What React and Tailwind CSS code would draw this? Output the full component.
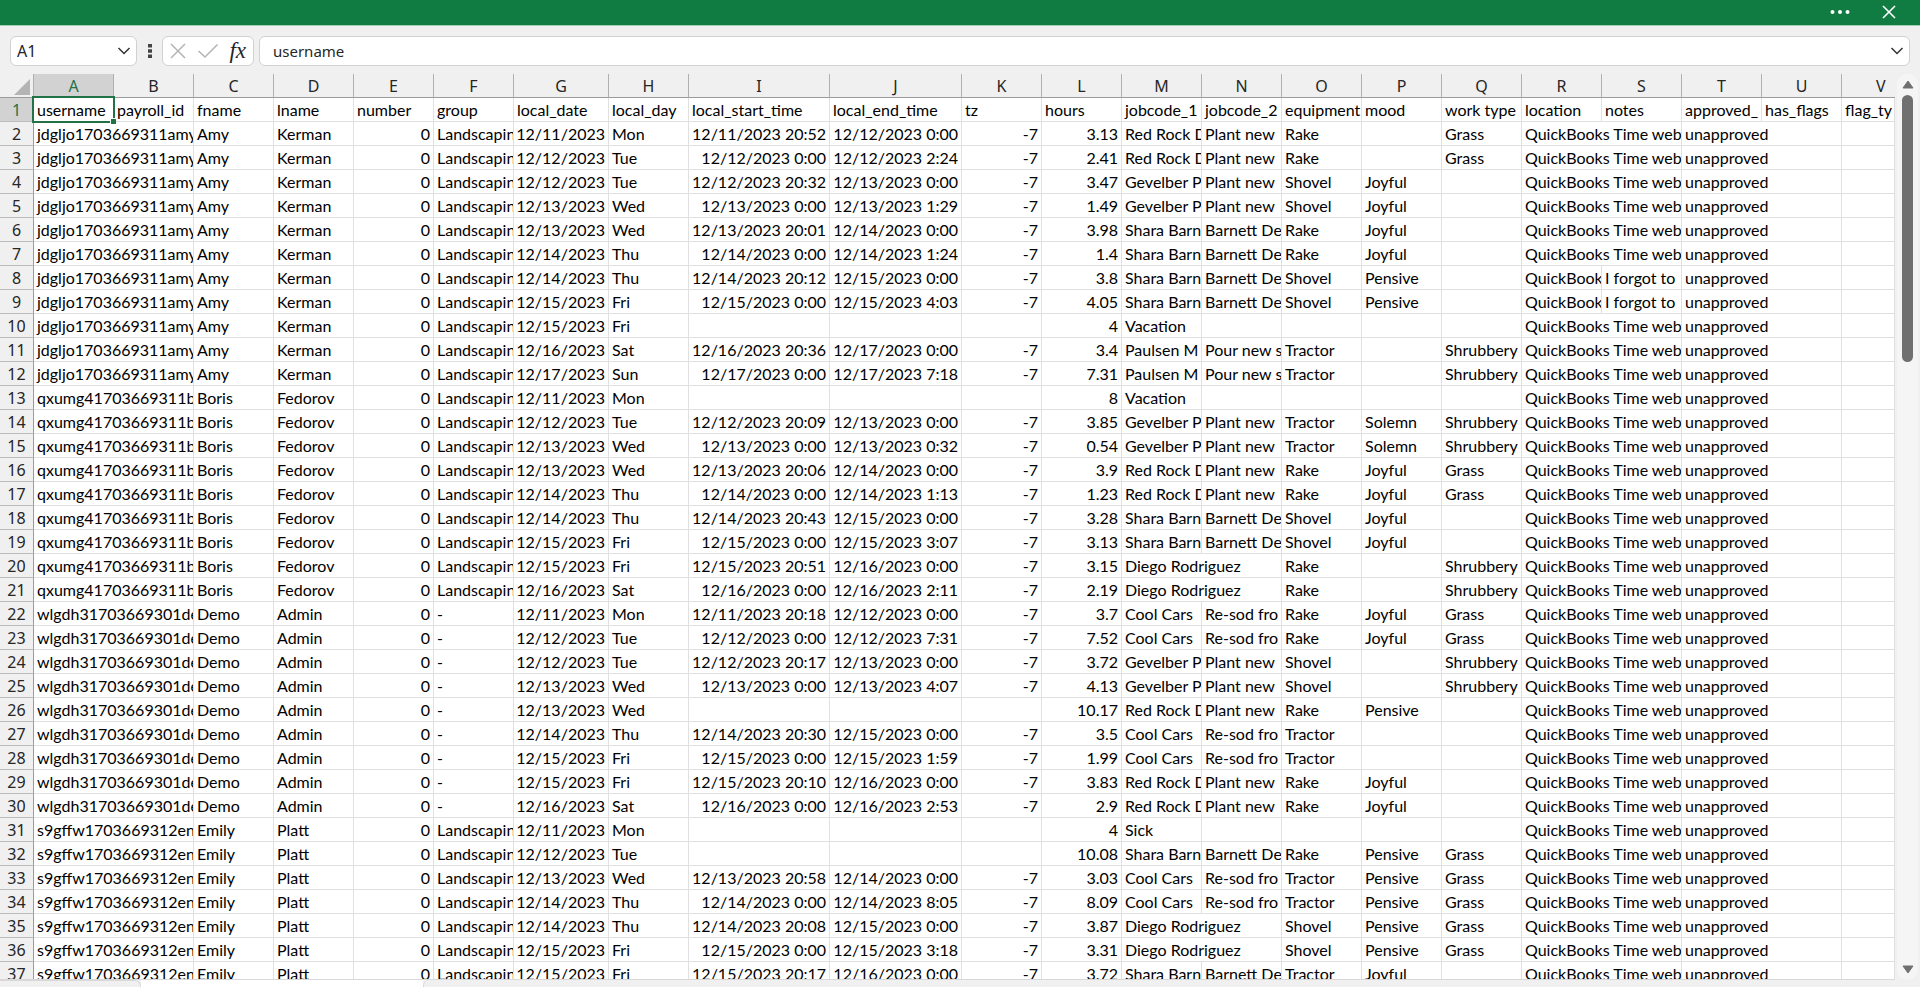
import { Fragment } from "react";

const COLUMNS = [
  ["A", "w-[80px]"],
  ["B", "w-[80px]"],
  ["C", "w-[80px]"],
  ["D", "w-[80px]"],
  ["E", "w-[80px]"],
  ["F", "w-[80px]"],
  ["G", "w-[95px]"],
  ["H", "w-[80px]"],
  ["I", "w-[141px]"],
  ["J", "w-[132px]"],
  ["K", "w-[80px]"],
  ["L", "w-[80px]"],
  ["M", "w-[80px]"],
  ["N", "w-[80px]"],
  ["O", "w-[80px]"],
  ["P", "w-[80px]"],
  ["Q", "w-[80px]"],
  ["R", "w-[80px]"],
  ["S", "w-[80px]"],
  ["T", "w-[80px]"],
  ["U", "w-[80px]"],
];

const FIELDS = [
  "username", "payroll_id", "fname", "lname", "number", "group", "local_date", "local_day",
  "local_start_time", "local_end_time", "tz", "hours", "jobcode_1", "jobcode_2", "equipment",
  "mood", "work type", "location", "notes", "approved_", "has_flags", "flag_ty",
];

const AMY = ["jdgljo1703669311amy", "Amy", "Kerman", "Landscapin"];
const BORIS = ["qxumg41703669311b", "Boris", "Fedorov", "Landscapin"];
const DEMO = ["wlgdh31703669301de", "Demo", "Admin", "-"];
const EMILY = ["s9gffw1703669312en", "Emily", "Platt", "Landscapin"];

const RED = ["Red Rock D", "Plant new"];
const GEV = ["Gevelber P", "Plant new"];
const SHARA = ["Shara Barn", "Barnett De"];
const PAULSEN = ["Paulsen M", "Pour new s"];
const DIEGO = ["Diego Rodriguez", ""];
const COOL = ["Cool Cars", "Re-sod fro"];
const VACATION = ["Vacation", ""];
const SICK = ["Sick", ""];

// person, day of month, weekday, start, end, hours, job, equipment, mood, work type, note
const ENTRIES = [
  [AMY, 11, "Mon", "11/2023 20:52", "12/2023 0:00", "3.13", RED, "Rake", "", "Grass"],
  [AMY, 12, "Tue", "12/2023 0:00", "12/2023 2:24", "2.41", RED, "Rake", "", "Grass"],
  [AMY, 12, "Tue", "12/2023 20:32", "13/2023 0:00", "3.47", GEV, "Shovel", "Joyful", ""],
  [AMY, 13, "Wed", "13/2023 0:00", "13/2023 1:29", "1.49", GEV, "Shovel", "Joyful", ""],
  [AMY, 13, "Wed", "13/2023 20:01", "14/2023 0:00", "3.98", SHARA, "Rake", "Joyful", ""],
  [AMY, 14, "Thu", "14/2023 0:00", "14/2023 1:24", "1.4", SHARA, "Rake", "Joyful", ""],
  [AMY, 14, "Thu", "14/2023 20:12", "15/2023 0:00", "3.8", SHARA, "Shovel", "Pensive", "", "I forgot to"],
  [AMY, 15, "Fri", "15/2023 0:00", "15/2023 4:03", "4.05", SHARA, "Shovel", "Pensive", "", "I forgot to"],
  [AMY, 15, "Fri", "", "", "4", VACATION, "", "", ""],
  [AMY, 16, "Sat", "16/2023 20:36", "17/2023 0:00", "3.4", PAULSEN, "Tractor", "", "Shrubbery"],
  [AMY, 17, "Sun", "17/2023 0:00", "17/2023 7:18", "7.31", PAULSEN, "Tractor", "", "Shrubbery"],
  [BORIS, 11, "Mon", "", "", "8", VACATION, "", "", ""],
  [BORIS, 12, "Tue", "12/2023 20:09", "13/2023 0:00", "3.85", GEV, "Tractor", "Solemn", "Shrubbery"],
  [BORIS, 13, "Wed", "13/2023 0:00", "13/2023 0:32", "0.54", GEV, "Tractor", "Solemn", "Shrubbery"],
  [BORIS, 13, "Wed", "13/2023 20:06", "14/2023 0:00", "3.9", RED, "Rake", "Joyful", "Grass"],
  [BORIS, 14, "Thu", "14/2023 0:00", "14/2023 1:13", "1.23", RED, "Rake", "Joyful", "Grass"],
  [BORIS, 14, "Thu", "14/2023 20:43", "15/2023 0:00", "3.28", SHARA, "Shovel", "Joyful", ""],
  [BORIS, 15, "Fri", "15/2023 0:00", "15/2023 3:07", "3.13", SHARA, "Shovel", "Joyful", ""],
  [BORIS, 15, "Fri", "15/2023 20:51", "16/2023 0:00", "3.15", DIEGO, "Rake", "", "Shrubbery"],
  [BORIS, 16, "Sat", "16/2023 0:00", "16/2023 2:11", "2.19", DIEGO, "Rake", "", "Shrubbery"],
  [DEMO, 11, "Mon", "11/2023 20:18", "12/2023 0:00", "3.7", COOL, "Rake", "Joyful", "Grass"],
  [DEMO, 12, "Tue", "12/2023 0:00", "12/2023 7:31", "7.52", COOL, "Rake", "Joyful", "Grass"],
  [DEMO, 12, "Tue", "12/2023 20:17", "13/2023 0:00", "3.72", GEV, "Shovel", "", "Shrubbery"],
  [DEMO, 13, "Wed", "13/2023 0:00", "13/2023 4:07", "4.13", GEV, "Shovel", "", "Shrubbery"],
  [DEMO, 13, "Wed", "", "", "10.17", RED, "Rake", "Pensive", ""],
  [DEMO, 14, "Thu", "14/2023 20:30", "15/2023 0:00", "3.5", COOL, "Tractor", "", ""],
  [DEMO, 15, "Fri", "15/2023 0:00", "15/2023 1:59", "1.99", COOL, "Tractor", "", ""],
  [DEMO, 15, "Fri", "15/2023 20:10", "16/2023 0:00", "3.83", RED, "Rake", "Joyful", ""],
  [DEMO, 16, "Sat", "16/2023 0:00", "16/2023 2:53", "2.9", RED, "Rake", "Joyful", ""],
  [EMILY, 11, "Mon", "", "", "4", SICK, "", "", ""],
  [EMILY, 12, "Tue", "", "", "10.08", SHARA, "Rake", "Pensive", "Grass"],
  [EMILY, 13, "Wed", "13/2023 20:58", "14/2023 0:00", "3.03", COOL, "Tractor", "Pensive", "Grass"],
  [EMILY, 14, "Thu", "14/2023 0:00", "14/2023 8:05", "8.09", COOL, "Tractor", "Pensive", "Grass"],
  [EMILY, 14, "Thu", "14/2023 20:08", "15/2023 0:00", "3.87", DIEGO, "Shovel", "Pensive", "Grass"],
  [EMILY, 15, "Fri", "15/2023 0:00", "15/2023 3:18", "3.31", DIEGO, "Shovel", "Pensive", "Grass"],
  [EMILY, 15, "Fri", "15/2023 20:17", "16/2023 0:00", "3.72", SHARA, "Tractor", "Joyful", ""],
];

function Cell({ children, right, span = 1 }) {
  return (
    <td
      colSpan={span}
      className={
        right
          ? "h-6 overflow-hidden whitespace-nowrap border-r border-b border-[#e0e0e0] pr-[3px] text-right"
          : "h-6 overflow-hidden whitespace-nowrap border-r border-b border-[#e0e0e0] pl-[3px]"
      }
    >
      {children}
    </td>
  );
}

function RowHead({ n, active }) {
  return (
    <th
      scope="row"
      className={
        active
          ? "h-6 border-r border-b border-r-[#9b9b9b] border-b-[#bdbdbd] bg-[#d2d2d2] text-center font-['Noto_Sans',sans-serif] font-normal text-[#217346]"
          : "h-6 border-r border-b border-r-[#9b9b9b] border-b-[#bdbdbd] bg-[#f0f0f0] text-center font-['Noto_Sans',sans-serif] font-normal text-[#262626]"
      }
    >
      {n}
    </th>
  );
}

function Entry({ n, entry }) {
  const [who, day, weekday, start, end, hours, job, equipment, mood, work, note] = entry;
  return (
    <tr>
      <RowHead n={n} />
      <Cell span={2}>{who[0]}</Cell>
      <Cell>{who[1]}</Cell>
      <Cell>{who[2]}</Cell>
      <Cell right>0</Cell>
      <Cell>{who[3]}</Cell>
      <Cell right>{`12/${day}/2023`}</Cell>
      <Cell>{weekday}</Cell>
      <Cell right>{start && `12/${start}`}</Cell>
      <Cell right>{end && `12/${end}`}</Cell>
      <Cell right>{start && "-7"}</Cell>
      <Cell right>{hours}</Cell>
      {job === DIEGO ? (
        <Cell span={2}>{job[0]}</Cell>
      ) : (
        <Fragment>
          <Cell>{job[0]}</Cell>
          <Cell>{job[1]}</Cell>
        </Fragment>
      )}
      <Cell>{equipment}</Cell>
      <Cell>{mood}</Cell>
      <Cell>{work}</Cell>
      {note ? (
        <Fragment>
          <Cell>QuickBooks</Cell>
          <Cell>{note}</Cell>
        </Fragment>
      ) : (
        <Cell span={2}>QuickBooks Time web</Cell>
      )}
      <Cell span={2}>unapproved</Cell>
      <Cell />
    </tr>
  );
}

function Chevron() {
  return (
    <svg viewBox="0 0 14 8" className="h-2 w-3.5" fill="none" stroke="#333" strokeWidth="1.5">
      <path d="M1.5 1 7 6.5 12.5 1" />
    </svg>
  );
}

function TitleBar() {
  return (
    <header className="flex h-[26px] shrink-0 items-start justify-end gap-8 border-b border-[#9fd0b3] bg-[#107c41] pr-6">
      <button aria-label="More options" className="flex h-6 items-center">
        <svg viewBox="0 0 20 4" className="h-1 w-5" fill="#fff">
          <circle cx="2.5" cy="2" r="2" />
          <circle cx="10" cy="2" r="2" />
          <circle cx="17.5" cy="2" r="2" />
        </svg>
      </button>
      <button aria-label="Close" className="flex h-6 items-center">
        <svg viewBox="0 0 14 14" className="size-3.5" fill="none" stroke="#fff" strokeWidth="1.6">
          <path d="M1 1 13 13M13 1 1 13" />
        </svg>
      </button>
    </header>
  );
}

function FormulaBar() {
  return (
    <div className="flex h-12 shrink-0 items-end px-[10px] font-['Noto_Sans',sans-serif] text-[15px] text-[#262626]">
      <div className="mb-2 flex h-[30px] w-[127px] items-center rounded-md border border-[#d1d1d1] bg-white pr-[5px]">
        <input
          aria-label="Name box"
          defaultValue="A1"
          className="min-w-0 flex-1 bg-transparent pl-1.5 text-[16px] outline-none"
        />
        <button aria-label="Open name list">
          <Chevron />
        </button>
      </div>
      <svg viewBox="0 0 4 14" className="mr-[10px] mb-4 ml-[11px] h-3.5 w-1" fill="#444">
        <path d="M0 0h4v3.500H0zM0 5.200h4v3.500H0zM0 10.400h4v3.500H0z" />
      </svg>
      <div className="mb-2 flex h-[30px] w-[92px] items-center justify-between rounded-md border border-[#d1d1d1] bg-white px-[7px]">
        <button aria-label="Cancel">
          <svg viewBox="0 0 16 16" className="size-4" fill="none" stroke="#b4b4b4" strokeWidth="1.5">
            <path d="M1 1 15 15M15 1 1 15" />
          </svg>
        </button>
        <button aria-label="Enter">
          <svg viewBox="0 0 20 16" className="h-4 w-5" fill="none" stroke="#b4b4b4" strokeWidth="1.5">
            <path d="M.5 8 7 14 19.500 1.500" />
          </svg>
        </button>
        <button
          aria-label="Insert function"
          className="font-['Liberation_Serif',serif] text-[23px] leading-6 text-[#262626] italic"
        >
          fx
        </button>
      </div>
      <div className="mb-2 ml-[5px] flex h-[30px] flex-1 items-center rounded-md border border-[#d1d1d1] bg-white pr-[5px]">
        <input
          aria-label="Formula"
          defaultValue="username"
          className="min-w-0 flex-1 bg-transparent pl-[13px] outline-none"
        />
        <button aria-label="Expand formula bar">
          <Chevron />
        </button>
      </div>
    </div>
  );
}

function Sheet() {
  return (
    <div className="min-w-0 flex-1 overflow-hidden border-b border-[#d8d8d8] bg-white">
      <table className="w-full table-fixed border-separate border-spacing-0 font-['Lato',sans-serif] text-[16px] leading-[22px] text-black">
        <colgroup>
          <col className="w-[34px]" />
          {COLUMNS.map(([name, width]) => (
            <col key={name} className={width} />
          ))}
          <col />
        </colgroup>
        <thead className="bg-[#f0f0f0] font-['Noto_Sans',sans-serif] text-[#262626]">
          <tr>
            <td aria-label="Select all" className="h-6 border-r border-b border-r-[#b0b0b0] border-b-[#9b9b9b]">
              <svg viewBox="0 0 16 16" className="mt-0.5 mr-[3px] ml-auto size-4" fill="#b4b4b4">
                <path d="M16 0V16H0z" />
              </svg>
            </td>
            {COLUMNS.map(([name]) => (
              <th
                key={name}
                scope="col"
                className={
                  name === "A"
                    ? "h-6 border-r border-b border-r-[#b0b0b0] border-b-[#9b9b9b] bg-[#d2d2d2] font-normal text-[#217346]"
                    : "h-6 border-r border-b border-r-[#b0b0b0] border-b-[#9b9b9b] font-normal"
                }
              >
                {name}
              </th>
            ))}
            <th scope="col" className="h-6 overflow-hidden border-b border-[#9b9b9b] pl-[34px] text-left font-normal">
              V
            </th>
          </tr>
        </thead>
        <tbody>
          <tr>
            <RowHead n={1} active />
            {FIELDS.map((name, i) =>
              i === 0 ? (
                <td key={name} className="relative h-6 border-r border-b border-[#e0e0e0] pl-[3px]">
                  {name}
                  <span className="pointer-events-none absolute -inset-0.5 border-2 border-[#217346]" />
                  <span className="pointer-events-none absolute -right-[3px] -bottom-[3px] size-[6px] border-t border-l border-white bg-[#217346]" />
                </td>
              ) : (
                <Cell key={name}>{name}</Cell>
              )
            )}
          </tr>
          {ENTRIES.map((entry, i) => (
            <Entry key={i} n={i + 2} entry={entry} />
          ))}
        </tbody>
      </table>
    </div>
  );
}

function ScrollBar() {
  return (
    <div className="mx-0.5 flex w-[21px] shrink-0 flex-col items-center rounded-full bg-[#f5f5f5] py-1.5">
      <button aria-label="Scroll up">
        <svg viewBox="0 0 12 9" className="h-[9px] w-3" fill="#707070" stroke="#707070" strokeLinejoin="round">
          <path d="M6 1 11 8H1z" />
        </svg>
      </button>
      <div className="mt-1.5 h-[267px] w-[11px] rounded-full bg-[#707070]" />
      <button aria-label="Scroll down" className="mt-auto">
        <svg viewBox="0 0 12 9" className="h-[9px] w-3" fill="#707070" stroke="#707070" strokeLinejoin="round">
          <path d="M6 8 11 1H1z" />
        </svg>
      </button>
    </div>
  );
}

export default function App() {
  return (
    <div className="flex h-screen flex-col overflow-hidden bg-[#f0f0f0]">
      <TitleBar />
      <FormulaBar />
      <main className="flex min-h-0 flex-1">
        <Sheet />
        <ScrollBar />
      </main>
      <footer className="flex h-[7px] shrink-0">
        <div className="w-[141px] rounded-tr-md border-t border-r border-[#d8d8d8]" />
        <div className="w-[282px] bg-white" />
        <div className="flex-1 rounded-tl-md border-l border-[#d8d8d8]" />
      </footer>
    </div>
  );
}
